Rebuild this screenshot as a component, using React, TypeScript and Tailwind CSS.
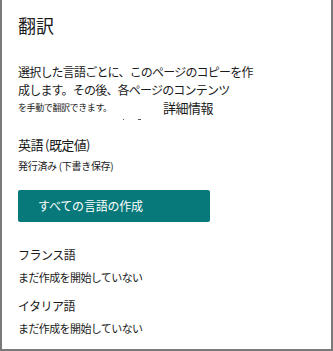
const font = { fontFamily: '"Noto Sans CJK JP", "Noto Sans", sans-serif' }

function LangBlock({ name, status }: { name: string; status: string }) {
  return (
    <div className="flex flex-col">
      <div className="h-[18px] text-[12px] leading-[18px] tracking-[-0.5px]">{name}</div>
      <div className="mt-[4px] h-[18px] text-[11px] leading-[18px] tracking-[-0.6px]">{status}</div>
    </div>
  )
}

export default function App() {
  return (
    <div
      style={font}
      className="w-[333px] h-[351px] bg-white text-[#1a1a1a] border-l-2 border-r-2 border-b-2 border-[#7a7a7a] pl-[16px] pt-[13px] flex flex-col"
    >
      <h1 className="h-[24px] text-[18px] leading-[24px] font-normal">翻訳</h1>

      <div className="mt-[26px] flex flex-col text-[12px] leading-[18px] tracking-[-0.8px]">
        <p>選択した言語ごとに、このページのコピーを作</p>
        <p>成します。その後、各ページのコンテンツ</p>
        <p className="flex items-center h-[18px]">
          <span className="text-[9px] tracking-[-0.4px] w-[145px]">を手動で翻訳できます。</span>
          <span className="text-[13px] tracking-[-0.5px]">詳細情報</span>
        </p>
      </div>

      <div className="flex h-[4px] items-center gap-[14px] pl-[105px]">
        <span className="w-[1px] h-[1px] bg-[#555]" />
        <span className="w-[3px] h-[1px] bg-[#555]" />
      </div>

      <div className="mt-[15px] h-[18px] text-[13px] leading-[18px] tracking-[-0.6px]">英語 (既定値)</div>
      <div className="mt-[3px] h-[18px] text-[10px] leading-[18px] tracking-[-0.3px]">発行済み (下書き保存)</div>

      <button className="mt-[15px] w-[192px] h-[32px] rounded-[2px] bg-[#07797a] text-white text-[12px] tracking-[-0.2px] text-left pl-[20px]">
        すべての言語の作成
      </button>

      <div className="mt-[24px] flex flex-col gap-[11px]">
        <LangBlock name="フランス語" status="まだ作成を開始していない" />
        <LangBlock name="イタリア語" status="まだ作成を開始していない" />
      </div>
    </div>
  )
}
